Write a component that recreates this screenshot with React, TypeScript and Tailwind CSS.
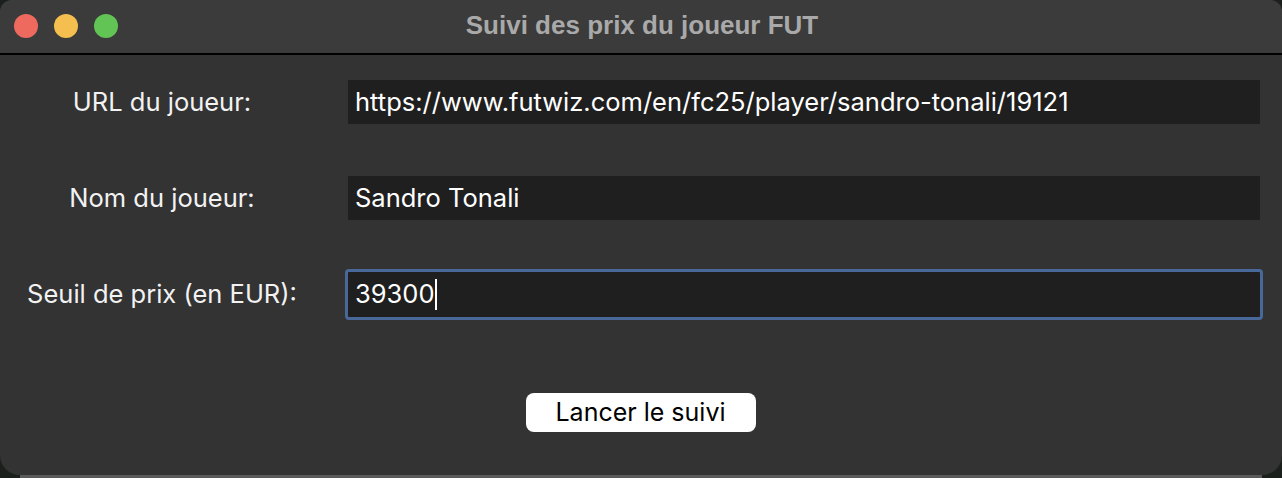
const FONT = { fontFamily: '"Liberation Sans", Arial, sans-serif' };
const UI = { fontFamily: 'Inter, "Liberation Sans", Arial, sans-serif' };

function Field({ label, value, focused }: { label: string; value: string; focused?: boolean }) {
  return (
    <div className="flex items-center h-[44px]">
      <div className="w-[348px] shrink-0 flex justify-center pr-[24px]">
        <span className="text-[25.5px] text-[#f2f2f2] leading-none" style={UI}>{label}</span>
      </div>
      {focused ? (
        <div className="ml-[-3px] w-[918px] h-[51px] rounded-[4px] border-[3px] border-[#48689a] bg-[#1f1f1f] flex items-center pl-[7px]">
          <span className="text-[25.5px] text-white leading-none" style={UI}>{value}</span>
          <span className="w-[2px] h-[31px] bg-white" />
        </div>
      ) : (
        <div className="w-[912px] h-[44px] bg-[#1f1f1f] flex items-center pl-[7px]">
          <span className="text-[25.5px] text-white leading-none" style={UI}>{value}</span>
        </div>
      )}
    </div>
  );
}

export default function App() {
  return (
    <div className="w-[1282px] h-[478px] bg-[#1c201d] overflow-hidden" style={FONT}>
      <div className="h-[475px] rounded-t-[12px] rounded-b-[20px] overflow-hidden flex flex-col bg-[#333333]">
        <header className="h-[55px] shrink-0 bg-[#3a3b3a] border-b-2 border-black relative flex items-center justify-center">
          <div className="absolute left-[14px] top-[14px] flex gap-[16px]">
            <span className="w-[24px] h-[24px] rounded-full bg-[#ee6a5f]" />
            <span className="w-[24px] h-[24px] rounded-full bg-[#f5bf4f]" />
            <span className="w-[24px] h-[24px] rounded-full bg-[#61c454]" />
          </div>
          <h1 className="text-[26px] font-bold text-[#a9a9a9] leading-none ml-[2px] mt-[-4px]">
            Suivi des prix du joueur FUT
          </h1>
        </header>

        <main className="flex-1 flex flex-col pt-[25px]">
          <div className="flex flex-col gap-[52px]">
            <Field label="URL du joueur:" value="https://www.futwiz.com/en/fc25/player/sandro-tonali/19121" />
            <Field label="Nom du joueur:" value="Sandro Tonali" />
            <Field label="Seuil de prix (en EUR):" value="39300" focused />
          </div>
          <div className="flex justify-center mt-[77px]">
            <button className="w-[230px] h-[39px] rounded-[8px] bg-white text-black text-[25px] leading-none ml-[-1px]" style={UI}>
              Lancer le suivi
            </button>
          </div>
        </main>
      </div>
      <div className="h-[3px] bg-[#5a5a5a] mx-[20px]" />
    </div>
  );
}
